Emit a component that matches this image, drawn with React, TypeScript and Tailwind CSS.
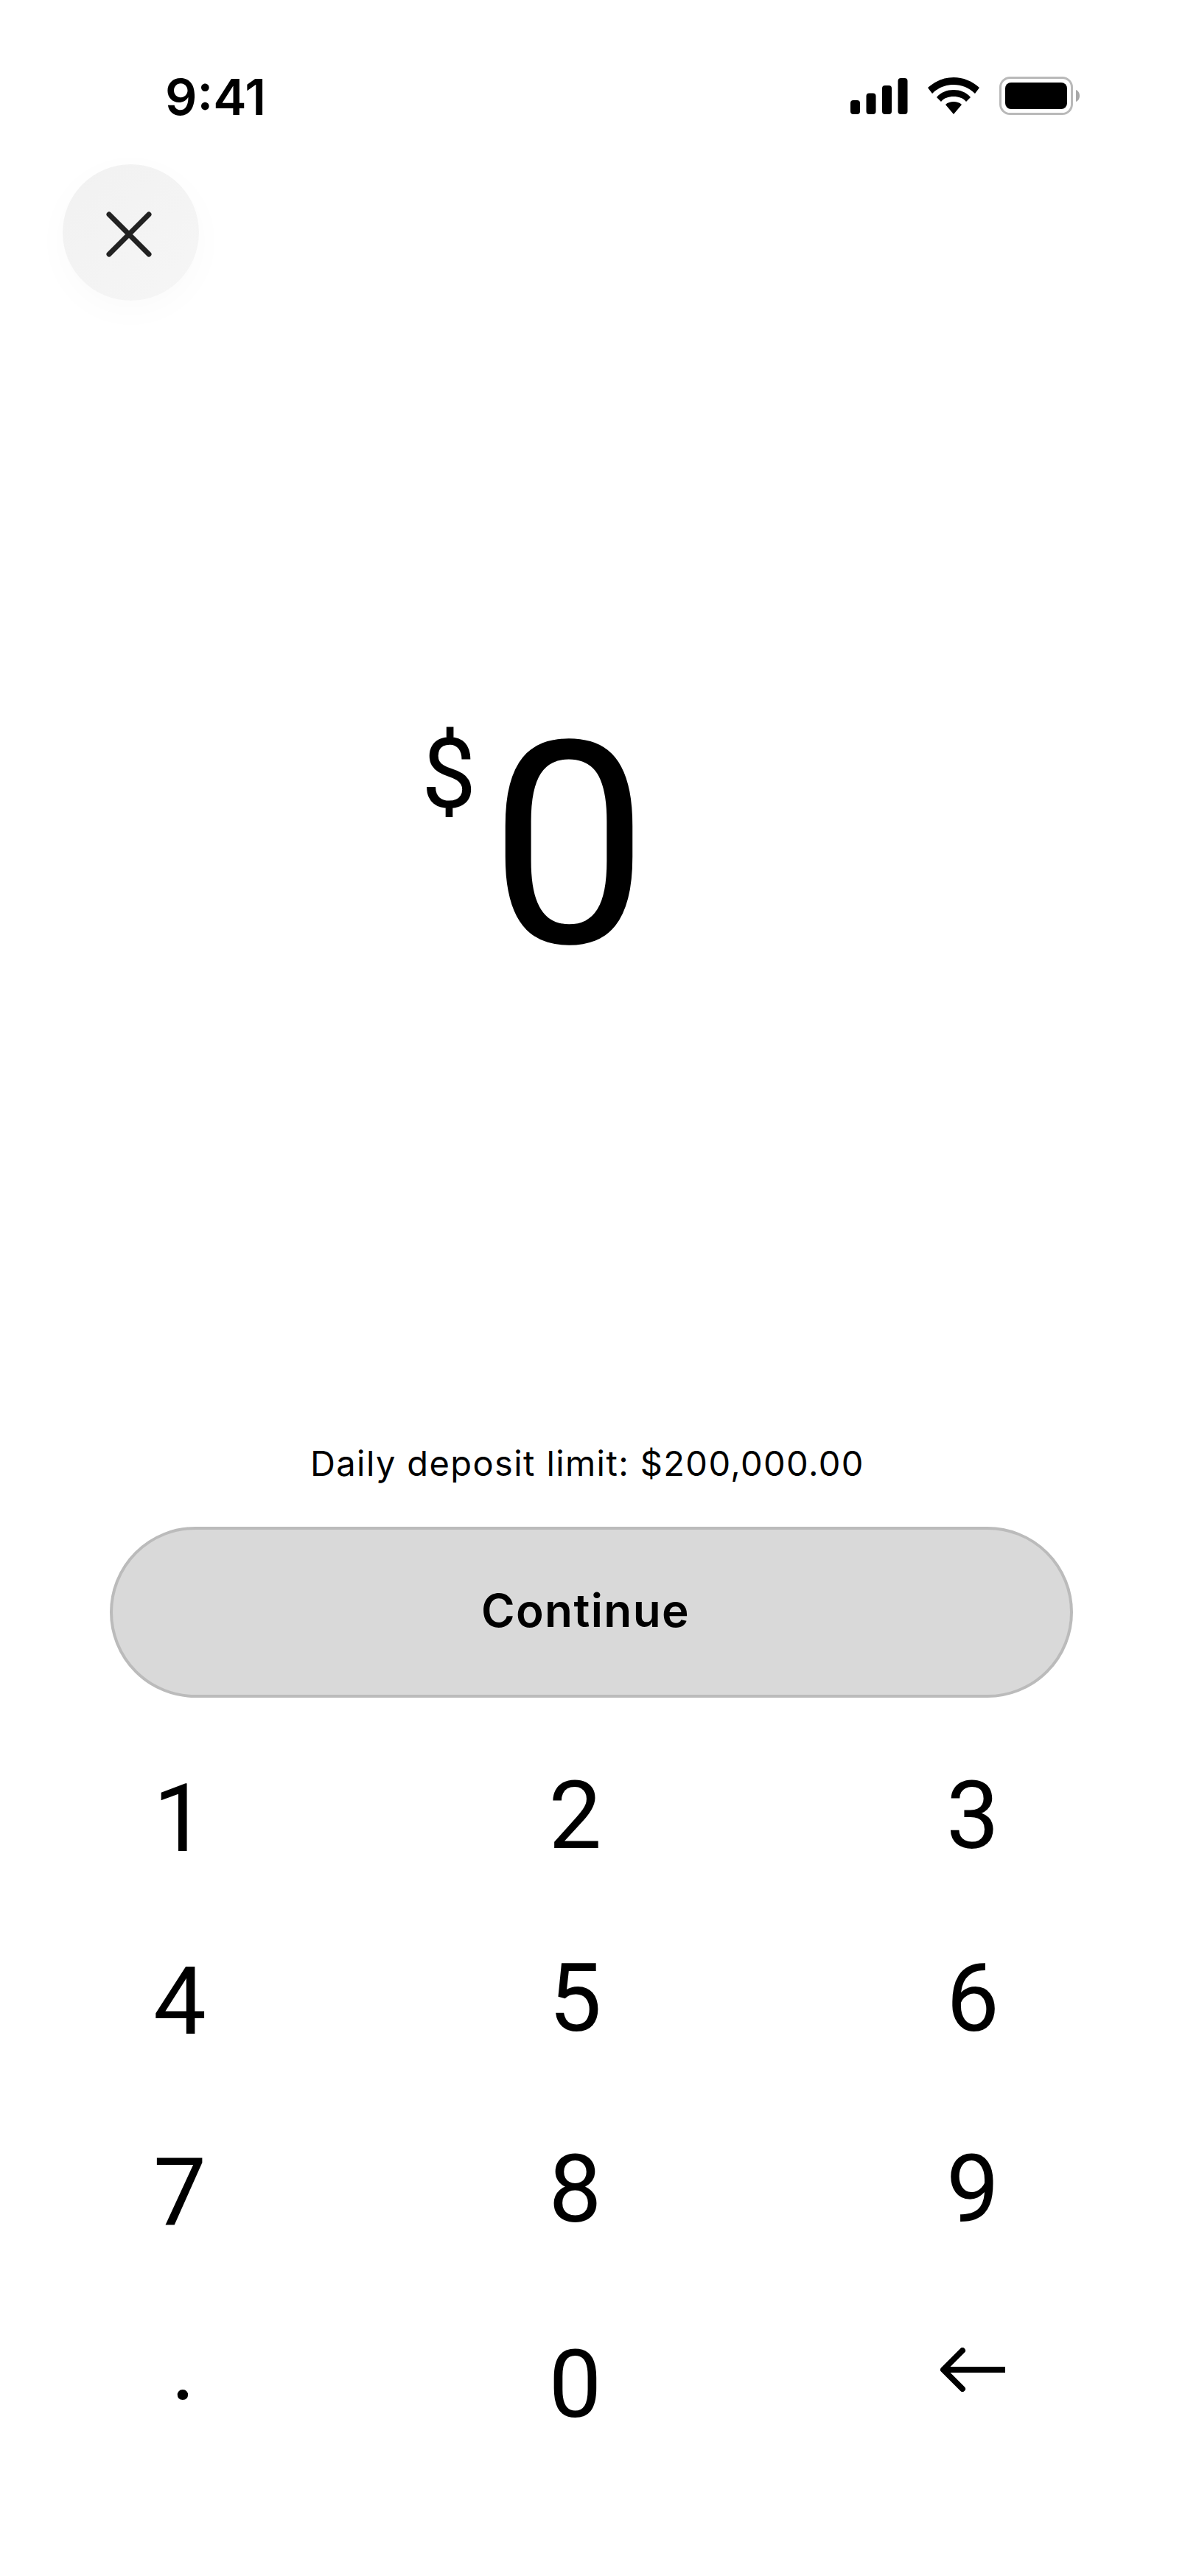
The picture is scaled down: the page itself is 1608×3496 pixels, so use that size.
const keys = [
  { label: "1", className: "pt-[4px]" },
  { label: "2", className: "pr-[3px]" },
  { label: "3", className: "" },
  { label: "4", className: "pt-[4px]" },
  { label: "5", className: "pr-[3px]" },
  { label: "6", className: "" },
  { label: "7", className: "pt-[5px]" },
  { label: "8", className: "pr-[3px]" },
  { label: "9", className: "" },
  { label: ".", className: "pl-[9px]" },
  { label: "0", className: "pr-[3px] pt-[24px]" },
];

function StatusBar() {
  return (
    <div className="flex h-[223px] items-start justify-between pl-[224px] pr-[142px] pt-[92px]">
      <span className="font-['Inter',sans-serif] text-[68px] leading-[78px] font-semibold text-black">9:41</span>
      <div className="mt-[12px] flex items-center">
        <svg width="78" height="49" viewBox="0 0 78 49" className="mr-[27px]" fill="#000">
          <rect x="0" y="30" width="13" height="19" rx="4" />
          <rect x="21.5" y="20.5" width="13" height="28.5" rx="4" />
          <rect x="43" y="10" width="13" height="39" rx="4" />
          <rect x="64.5" y="0" width="13" height="49" rx="4" />
        </svg>
        <svg width="70" height="50" viewBox="0 0 70 50" className="mr-[27px]" fill="#000">
          <path d="M35 0C22 0 10 5 0 14l6 8C14 14 24 10 35 10s21 4 29 12l6-8C60 5 48 0 35 0Z" />
          <path d="M35 17c-9 0-17 3-23 10l6 6c4-5 10-7 17-7s13 2 17 7l6-6c-6-7-14-10-23-10Z" />
          <path d="M35 33c-4 0-8 1-11 4l11 13 11-13c-3-3-7-4-11-4Z" />
        </svg>
        <svg width="110" height="52" viewBox="0 0 110 52">
          <rect x="1.5" y="1.5" width="97" height="49" rx="13" fill="none" stroke="#b9b9b9" strokeWidth="3" />
          <rect x="8" y="8" width="84" height="36" rx="8" fill="#000" />
          <path d="M104 18c3 1 5 4 5 8s-2 7-5 8Z" fill="#a8a8a8" />
        </svg>
      </div>
    </div>
  );
}

export default function App() {
  return (
    <div className="h-[3496px] w-[1608px] overflow-hidden bg-white font-['Roboto',sans-serif] text-black">
      <StatusBar />
      <div className="pl-[85px]">
        <button className="flex h-[185px] w-[185px] items-center justify-center rounded-full bg-linear-to-br from-[#f1f1f1] to-[#f6f6f6] pr-[6px] pt-[5px] shadow-[0_12px_50px_rgba(0,0,0,0.022)]">
          <svg width="62" height="62" viewBox="0 0 62 62" fill="none" stroke="#222" strokeWidth="7" strokeLinecap="round">
            <path d="M4 4 58 58M58 4 4 58" />
          </svg>
        </button>
      </div>

      <div className="mt-[515px] flex h-[430px] items-start pl-[572px]">
        <span className="mt-[51px] text-[132px] leading-[155px]">$</span>
        <span className="ml-[18px] text-[384px] leading-[450px]">0</span>
      </div>

      <p className="mt-[605px] pl-[421px] font-['Inter',sans-serif] text-[47px] leading-[56px] tracking-[1.4px]">
        Daily deposit limit: $200,000.00
      </p>

      <div className="mt-[58px] pl-[149px]">
        <button className="flex h-[232px] w-[1307px] items-center justify-center rounded-full border-4 border-[#bbbbbb] bg-[#d9d9d9] pb-[6px] pr-[16px] font-['Inter',sans-serif] text-[62px] font-semibold tracking-[1.4px]">
          Continue
        </button>
      </div>

      <div className="mt-[85px] grid grid-cols-[120px_120px_120px] grid-rows-[248px_259px_241px_150px] justify-between pl-[184px] pr-[228px]">
        {keys.map((k) => (
          <div key={k.label} className={`flex justify-center ${k.className}`}>
            <span className="text-[128px] leading-[150px]">{k.label}</span>
          </div>
        ))}
        <div className="flex justify-center pr-[2px] pt-[49px]">
          <svg width="90" height="60" viewBox="0 0 90 60" fill="none" stroke="#000" strokeWidth="8">
            <path d="M6 30H90" />
            <path d="M32 4 6 30l26 26" strokeLinecap="round" strokeLinejoin="round" />
          </svg>
        </div>
      </div>
    </div>
  );
}
